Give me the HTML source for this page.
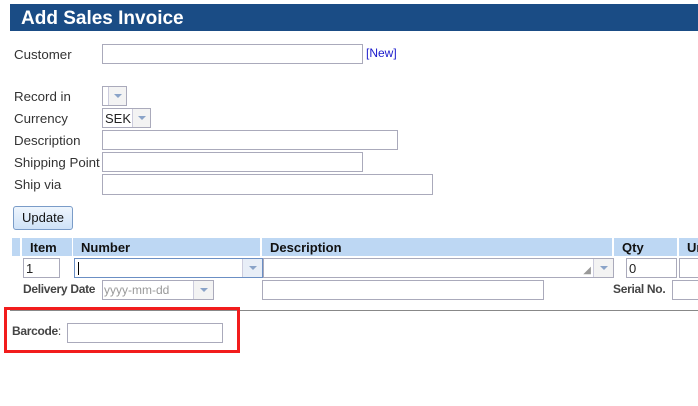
<!DOCTYPE html>
<html><head><style>
body{margin:0;width:698px;height:406px;background:#fff;position:relative;overflow:hidden;font-family:"Liberation Sans",sans-serif;color:#333}
.a{position:absolute}
.l{font-size:13.3px;color:#333}
.in{position:absolute;border:1px solid #aab;background:#fff;box-sizing:border-box}
.dd{position:absolute;box-sizing:border-box;border-left:1px solid #ccd;background:#f3f3f3;top:0;bottom:0;right:0}
.dd:after{content:"";position:absolute;left:50%;top:50%;margin:-2px 0 0 -4px;border-left:4px solid transparent;border-right:4px solid transparent;border-top:4px solid #8aa3c8}
.th{position:absolute;top:238px;height:18px;background:#bdd7f3;font-weight:bold;font-size:13px;color:#111;line-height:20px;box-sizing:border-box;padding-left:8px}
.b{font-weight:bold;font-size:12px;color:#444;letter-spacing:-0.3px}
</style></head><body>
<div class="a" style="left:10px;top:4px;width:688px;height:27px;background:#1a4c85"></div>
<div class="a" style="left:21px;top:8px;font-size:19px;font-weight:bold;color:#fff">Add Sales Invoice</div>

<div class="a l" style="left:14px;top:47px">Customer</div>
<div class="in" style="left:102px;top:44px;width:261px;height:20px"></div>
<div class="a" style="left:366px;top:46px;font-size:12px;color:#1a1acc">[New]</div>

<div class="a l" style="left:14px;top:89px">Record in</div>
<div class="in" style="left:102px;top:86px;width:25px;height:20px"><div class="dd" style="width:18px"></div></div>
<div class="a l" style="left:14px;top:111px">Currency</div>
<div class="in" style="left:102px;top:108px;width:49px;height:20px"><span style="position:absolute;left:2px;top:2px;font-size:13px;color:#222">SEK</span><div class="dd" style="width:18px"></div></div>
<div class="a l" style="left:14px;top:133px">Description</div>
<div class="in" style="left:102px;top:130px;width:296px;height:20px"></div>
<div class="a l" style="left:14px;top:155px">Shipping Point</div>
<div class="in" style="left:102px;top:152px;width:261px;height:20px"></div>
<div class="a l" style="left:14px;top:177px">Ship via</div>
<div class="in" style="left:102px;top:174px;width:331px;height:21px"></div>

<div class="a" style="left:13px;top:206px;width:60px;height:24px;box-sizing:border-box;border:1px solid #7a9cc8;border-radius:3px;background:linear-gradient(#eef5fd,#cfe2f7);font-size:13px;color:#111;text-align:center;line-height:22px">Update</div>

<div class="th" style="left:12px;width:8px;padding:0"></div>
<div class="th" style="left:22px;width:50px">Item</div>
<div class="th" style="left:73px;width:187px">Number</div>
<div class="th" style="left:262px;width:350px">Description</div>
<div class="th" style="left:614px;width:63px">Qty</div>
<div class="th" style="left:679px;width:19px">Un</div>

<div class="in" style="left:23px;top:258px;width:37px;height:20px"><span style="position:absolute;left:2px;top:2px;font-size:13px;color:#222">1</span></div>
<div class="in" style="left:74px;top:258px;width:189px;height:20px;border-color:#6b8fc4"><span style="position:absolute;left:3px;top:3px;width:1px;height:13px;background:#000"></span><div class="dd" style="width:20px;background:#e8eef7"></div></div>
<div class="in" style="left:263px;top:258px;width:351px;height:20px"><span style="position:absolute;right:22px;top:6px;font-size:10px;color:#999">◢</span><div class="dd" style="width:20px"></div></div>
<div class="in" style="left:626px;top:258px;width:51px;height:20px"><span style="position:absolute;left:2px;top:2px;font-size:13px;color:#222">0</span></div>
<div class="in" style="left:679px;top:258px;width:30px;height:20px"></div>

<div class="a b" style="left:23px;top:282px">Delivery Date</div>
<div class="in" style="left:102px;top:280px;width:112px;height:20px"><span style="position:absolute;left:1px;top:2px;font-size:12px;color:#999">yyyy-mm-dd</span><div class="dd" style="width:20px"></div></div>
<div class="in" style="left:262px;top:280px;width:282px;height:20px"></div>
<div class="a b" style="left:613px;top:282px">Serial No.</div>
<div class="in" style="left:672px;top:280px;width:40px;height:20px"></div>

<div class="a" style="left:10px;top:310px;width:688px;height:1px;background:#888"></div>
<div class="a" style="left:4px;top:307px;width:236px;height:46px;box-sizing:border-box;border:3px solid #f21c1c"></div>
<div class="a b" style="left:12px;top:324px">Barcode<span style="font-weight:normal">:</span></div>
<div class="in" style="left:67px;top:323px;width:156px;height:20px"></div>
</body></html>
